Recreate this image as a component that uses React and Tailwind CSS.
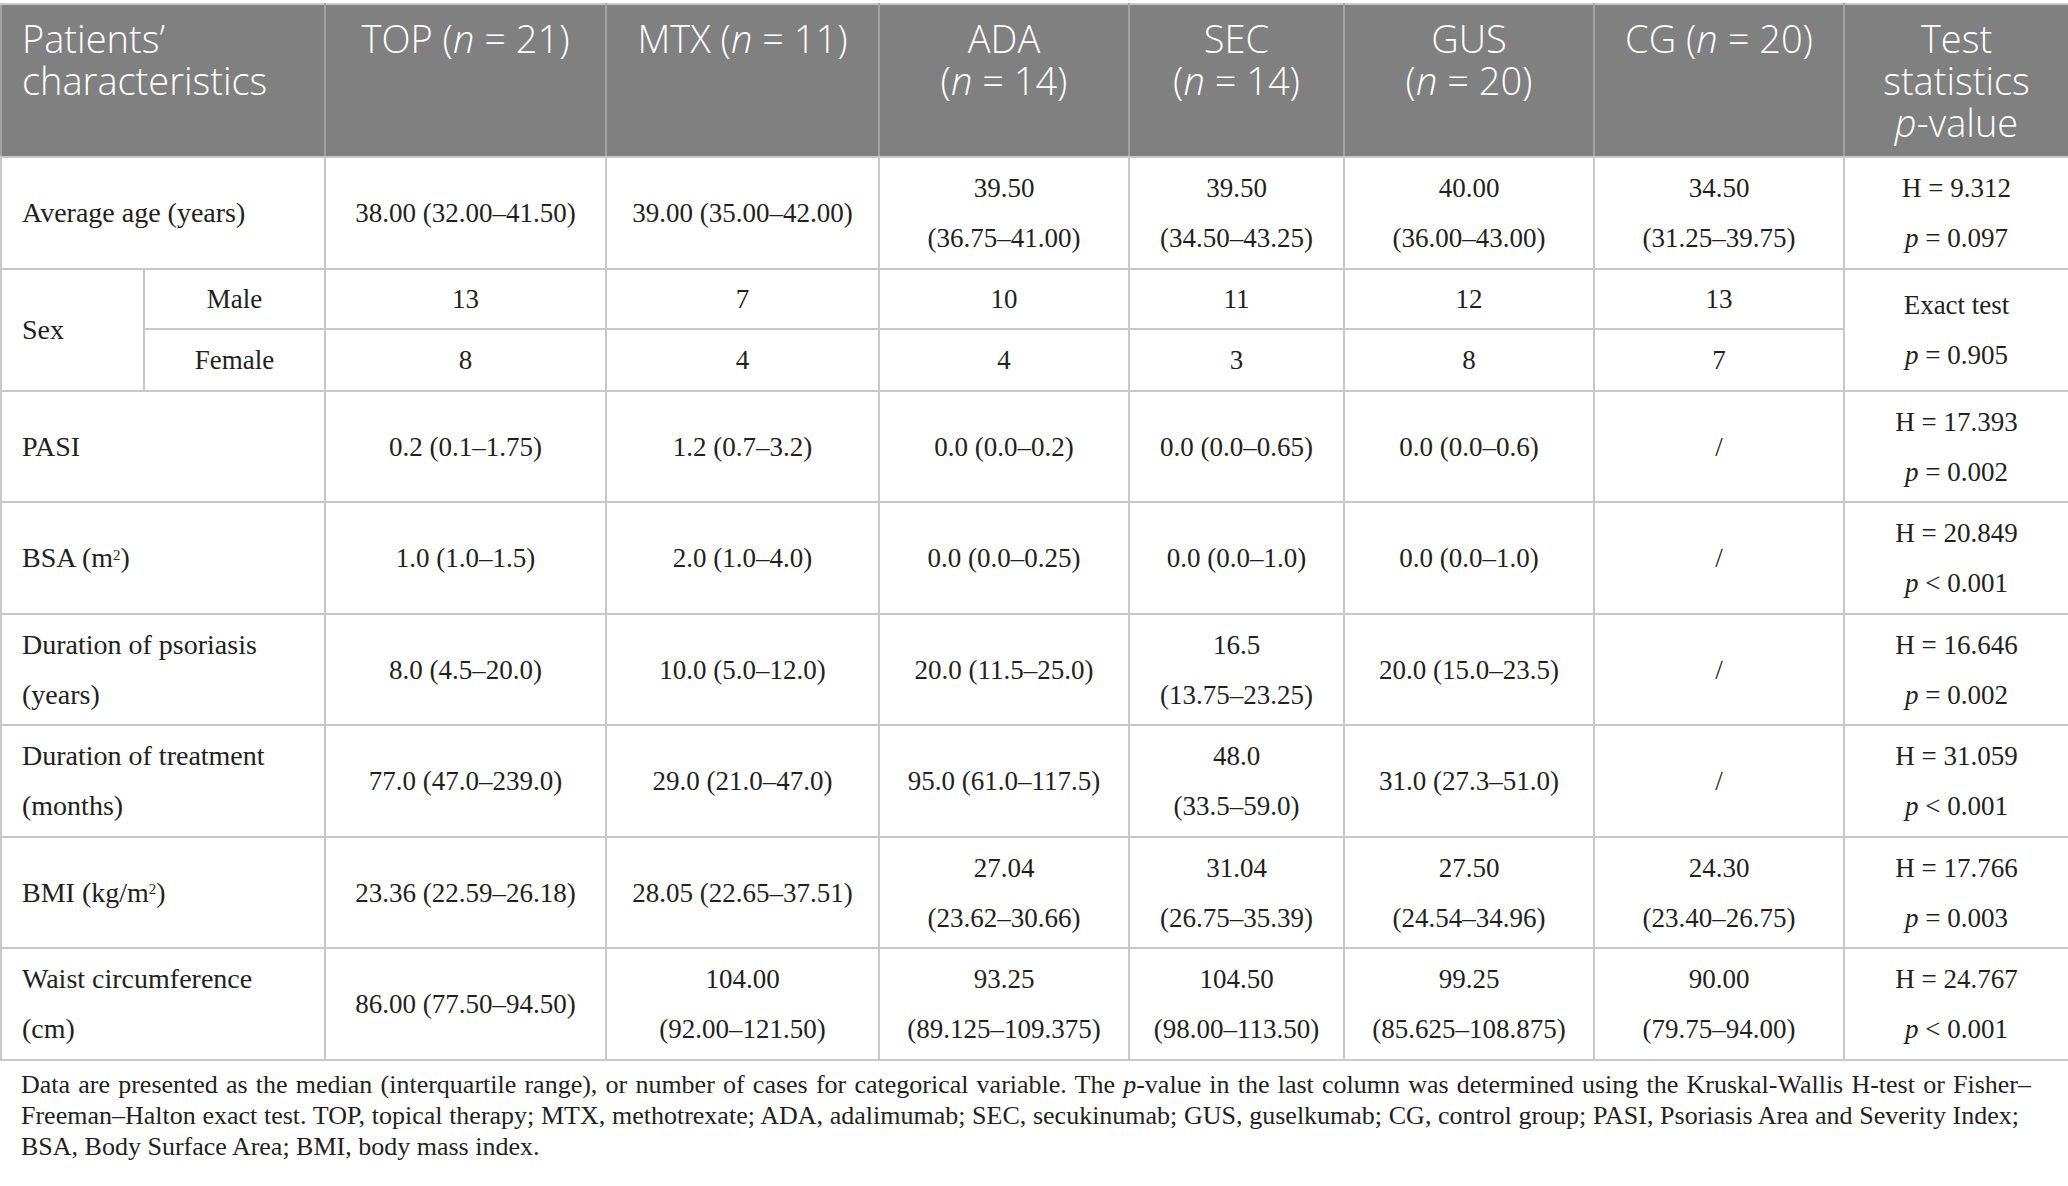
import React from 'react';

const colWidths = [143, 181, 281, 273, 250, 215, 250, 250, 225];

const serif = "font-['Liberation_Serif','Times_New_Roman',serif]";
const sans = "font-['Open_Sans','Noto_Sans',sans-serif]";

const P = ({ rel = '=', value }) => (
  <>
    <i>p</i> {rel} {value}
  </>
);

const rows = [
  {
    label: ['Average age (years)'],
    h: 'h-[112px]',
    cells: [
      ['38.00 (32.00–41.50)'],
      ['39.00 (35.00–42.00)'],
      ['39.50', '(36.75–41.00)'],
      ['39.50', '(34.50–43.25)'],
      ['40.00', '(36.00–43.00)'],
      ['34.50', '(31.25–39.75)'],
    ],
    test: ['H = 9.312', <P value="0.097" />],
  },
  {
    label: ['PASI'],
    h: 'h-[111px]',
    cells: [['0.2 (0.1–1.75)'], ['1.2 (0.7–3.2)'], ['0.0 (0.0–0.2)'], ['0.0 (0.0–0.65)'], ['0.0 (0.0–0.6)'], ['/']],
    test: ['H = 17.393', <P value="0.002" />],
  },
  {
    label: [
      <>
        BSA (m<sup className="text-[15px]">2</sup>)
      </>,
    ],
    h: 'h-[112px]',
    cells: [['1.0 (1.0–1.5)'], ['2.0 (1.0–4.0)'], ['0.0 (0.0–0.25)'], ['0.0 (0.0–1.0)'], ['0.0 (0.0–1.0)'], ['/']],
    test: ['H = 20.849', <P rel="<" value="0.001" />],
  },
  {
    label: ['Duration of psoriasis', '(years)'],
    h: 'h-[111px]',
    cells: [['8.0 (4.5–20.0)'], ['10.0 (5.0–12.0)'], ['20.0 (11.5–25.0)'], ['16.5', '(13.75–23.25)'], ['20.0 (15.0–23.5)'], ['/']],
    test: ['H = 16.646', <P value="0.002" />],
  },
  {
    label: ['Duration of treatment', '(months)'],
    h: 'h-[112px]',
    cells: [['77.0 (47.0–239.0)'], ['29.0 (21.0–47.0)'], ['95.0 (61.0–117.5)'], ['48.0', '(33.5–59.0)'], ['31.0 (27.3–51.0)'], ['/']],
    test: ['H = 31.059', <P rel="<" value="0.001" />],
  },
  {
    label: [
      <>
        BMI (kg/m<sup className="text-[15px]">2</sup>)
      </>,
    ],
    h: 'h-[111px]',
    cells: [
      ['23.36 (22.59–26.18)'],
      ['28.05 (22.65–37.51)'],
      ['27.04', '(23.62–30.66)'],
      ['31.04', '(26.75–35.39)'],
      ['27.50', '(24.54–34.96)'],
      ['24.30', '(23.40–26.75)'],
    ],
    test: ['H = 17.766', <P value="0.003" />],
  },
  {
    label: ['Waist circumference', '(cm)'],
    h: 'h-[112px]',
    cells: [
      ['86.00 (77.50–94.50)'],
      ['104.00', '(92.00–121.50)'],
      ['93.25', '(89.125–109.375)'],
      ['104.50', '(98.00–113.50)'],
      ['99.25', '(85.625–108.875)'],
      ['90.00', '(79.75–94.00)'],
    ],
    test: ['H = 24.767', <P rel="<" value="0.001" />],
  },
];

const Lines = ({ lines }) =>
  lines.map((line, i) => (
    <div key={i} className="whitespace-nowrap">
      {line}
    </div>
  ));

const td = 'border-2 border-[#c8c8c8] text-center align-middle leading-[50px]';
const labelTd = 'border-2 border-[#c8c8c8] pl-[20px] text-left align-middle leading-[50px] text-[28px]';

function DataRow({ row }) {
  return (
    <tr className={row.h}>
      <td colSpan={2} className={labelTd}>
        <Lines lines={row.label} />
      </td>
      {row.cells.map((c, i) => (
        <td key={i} className={td}>
          <Lines lines={c} />
        </td>
      ))}
      <td className={td}>
        <Lines lines={row.test} />
      </td>
    </tr>
  );
}

const headers = [
  ['TOP (', <i key="n">n</i>, ' = 21)'],
  ['MTX (', <i key="n">n</i>, ' = 11)'],
  ['ADA', <br key="b" />, '(', <i key="n">n</i>, ' = 14)'],
  ['SEC', <br key="b" />, '(', <i key="n">n</i>, ' = 14)'],
  ['GUS', <br key="b" />, '(', <i key="n">n</i>, ' = 20)'],
  ['CG (', <i key="n">n</i>, ' = 20)'],
  ['Test', <br key="b" />, 'statistics', <br key="c" />, <i key="p">p</i>, '-value'],
];

export default function App() {
  const th =
    'border-2 border-x-[#a2a2a2] border-t-[#c8c8c8] border-b-[#c8c8c8] text-center align-top pt-[12px] font-light whitespace-nowrap';
  return (
    <div className="min-h-screen w-[2068px] bg-white pt-[3px] text-[#231f20]">
      <table className={`w-[2068px] table-fixed border-collapse ${serif} text-[27px]`}>
        <colgroup>
          {colWidths.map((w, i) => (
            <col key={i} style={{ width: w }} />
          ))}
        </colgroup>
        <thead>
          <tr className={`h-[153px] bg-[#808080] text-white ${sans} text-[38px] leading-[42px]`}>
            <th colSpan={2} className={`${th} pl-[20px] text-left`}>
              Patients’
              <br />
              characteristics
            </th>
            {headers.map((h, i) => (
              <th key={i} className={th}>
                {h}
              </th>
            ))}
          </tr>
        </thead>
        <tbody>
          <DataRow row={rows[0]} />
          <tr className="h-[60px]">
            <td rowSpan={2} className={labelTd}>
              Sex
            </td>
            <td className={td}>Male</td>
            {['13', '7', '10', '11', '12', '13'].map((v, i) => (
              <td key={i} className={td}>
                {v}
              </td>
            ))}
            <td rowSpan={2} className={td}>
              <Lines lines={['Exact test', <P value="0.905" />]} />
            </td>
          </tr>
          <tr className="h-[62px]">
            <td className={td}>Female</td>
            {['8', '4', '4', '3', '8', '7'].map((v, i) => (
              <td key={i} className={td}>
                {v}
              </td>
            ))}
          </tr>
          {rows.slice(1).map((r, i) => (
            <DataRow key={i} row={r} />
          ))}
        </tbody>
      </table>
      <div className={`${serif} w-[2031px] pl-[21px] pt-[8px] text-[26px] leading-[31px] text-[#231f20]`}>
        <p className="text-justify [text-align-last:justify]">
          Data are presented as the median (interquartile range), or number of cases for categorical variable. The{' '}
          <i>p</i>-value in the last column was determined using the Kruskal-Wallis H-test or Fisher–
        </p>
        <p className="pr-[12px] text-justify [text-align-last:justify]">
          Freeman–Halton exact test. TOP, topical therapy; MTX, methotrexate; ADA, adalimumab; SEC, secukinumab; GUS,
          guselkumab; CG, control group; PASI, Psoriasis Area and Severity Index;
        </p>
        <p>BSA, Body Surface Area; BMI, body mass index.</p>
      </div>
    </div>
  );
}
